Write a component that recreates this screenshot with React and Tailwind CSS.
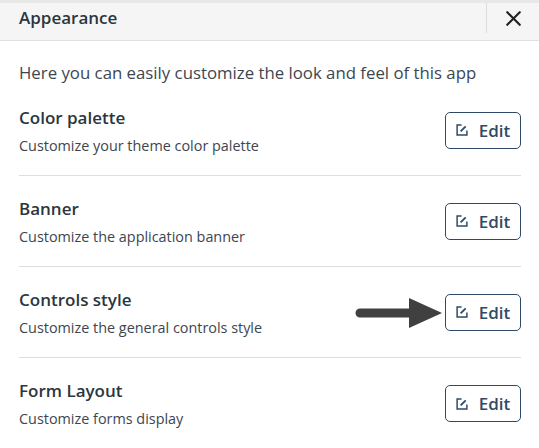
import React from 'react';
import { X } from 'lucide-react';

const ITEMS = [
  { title: 'Color palette', text: 'Customize your theme color palette' },
  { title: 'Banner', text: 'Customize the application banner' },
  { title: 'Controls style', text: 'Customize the general controls style', arrow: true },
  { title: 'Form Layout', text: 'Customize forms display' },
];

const EditIcon = () => (
  <svg width="12" height="12" viewBox="0 0 13 13" fill="none" stroke="#2f4a66" strokeWidth="1.6">
    <path d="M6 1.2H1.2V11.8H11.8V7" />
    <path d="M5 8L10.5 2.5" strokeWidth="2" />
  </svg>
);

const Arrow = () => (
  <svg className="absolute left-[-90px] top-[1px]" width="88" height="36" viewBox="0 0 88 36">
    <path d="M5 13.5H54V3L87 18L54 33V22.5H5a4.5 4.5 0 0 1 0-9z" fill="#404040" />
  </svg>
);

const Row = ({ item, last }) => (
  <div className={`flex items-center justify-between h-[91px] ${last ? '' : 'border-b border-[#dedede]'}`}>
    <div className="pt-[2px]">
      <div className="text-[17px] leading-[22px] font-semibold text-[#2b3640]">{item.title}</div>
      <div className="text-[14.4px] leading-[20px] mt-[7px] text-[#3d4650]">{item.text}</div>
    </div>
    <div className="relative">
      {item.arrow && <Arrow />}
      <button className="flex items-center justify-center gap-[11px] w-[76px] h-[37px] border border-[#2f4a66] rounded-[5px] bg-white text-[17px] font-semibold text-[#2f4a66]">
        <EditIcon />
        <span className="pt-[1px]">Edit</span>
      </button>
    </div>
  </div>
);

export default function App() {
  return (
    <div className="w-[539px] h-[448px] overflow-hidden bg-white font-['Open_Sans','Noto_Sans',sans-serif]">
      <div className="flex items-center justify-between h-[41px] pb-[7px] pl-[19px] bg-[#f5f5f5] border-b border-[#e0e0e0] border-t-[3px] border-t-[#e8e8e8] text-[17px] font-semibold text-[#2b3640]">
        <span>Appearance</span>
        <div className="flex items-center justify-center w-[53px] h-[30px] border-l border-[#dcdcdc]">
          <X size={25} strokeWidth={2.1} color="#222" />
        </div>
      </div>
      <div className="pl-[19px] pr-[18px] pt-[21px]">
        <p className="text-[16.8px] leading-[22px] text-[#3d4650]">Here you can easily customize the look and feel of this app</p>
        <div className="mt-[1px]">
          {ITEMS.map((item, i) => (
            <Row key={item.title} item={item} last={i === ITEMS.length - 1} />
          ))}
        </div>
      </div>
    </div>
  );
}
